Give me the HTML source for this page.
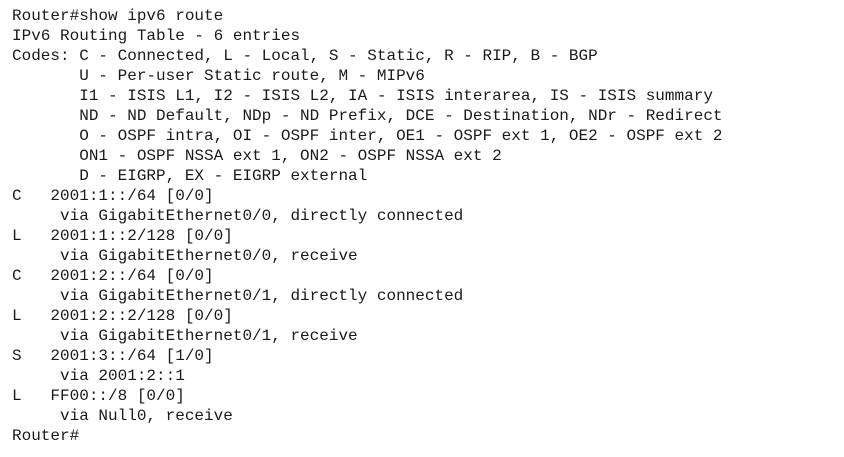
<!DOCTYPE html>
<html><head><meta charset="utf-8"><style>
html,body{margin:0;padding:0;background:#fff;width:844px;height:457px;overflow:hidden}
pre{margin:0;position:absolute;left:12px;top:6px;font-family:"Liberation Mono","Courier New",monospace;font-size:16px;line-height:20px;color:#1a1a1a}
</style></head><body><pre>Router#show ipv6 route
IPv6 Routing Table - 6 entries
Codes: C - Connected, L - Local, S - Static, R - RIP, B - BGP
       U - Per-user Static route, M - MIPv6
       I1 - ISIS L1, I2 - ISIS L2, IA - ISIS interarea, IS - ISIS summary
       ND - ND Default, NDp - ND Prefix, DCE - Destination, NDr - Redirect
       O - OSPF intra, OI - OSPF inter, OE1 - OSPF ext 1, OE2 - OSPF ext 2
       ON1 - OSPF NSSA ext 1, ON2 - OSPF NSSA ext 2
       D - EIGRP, EX - EIGRP external
C   2001:1::/64 [0/0]
     via GigabitEthernet0/0, directly connected
L   2001:1::2/128 [0/0]
     via GigabitEthernet0/0, receive
C   2001:2::/64 [0/0]
     via GigabitEthernet0/1, directly connected
L   2001:2::2/128 [0/0]
     via GigabitEthernet0/1, receive
S   2001:3::/64 [1/0]
     via 2001:2::1
L   FF00::/8 [0/0]
     via Null0, receive
Router#</pre></body></html>
